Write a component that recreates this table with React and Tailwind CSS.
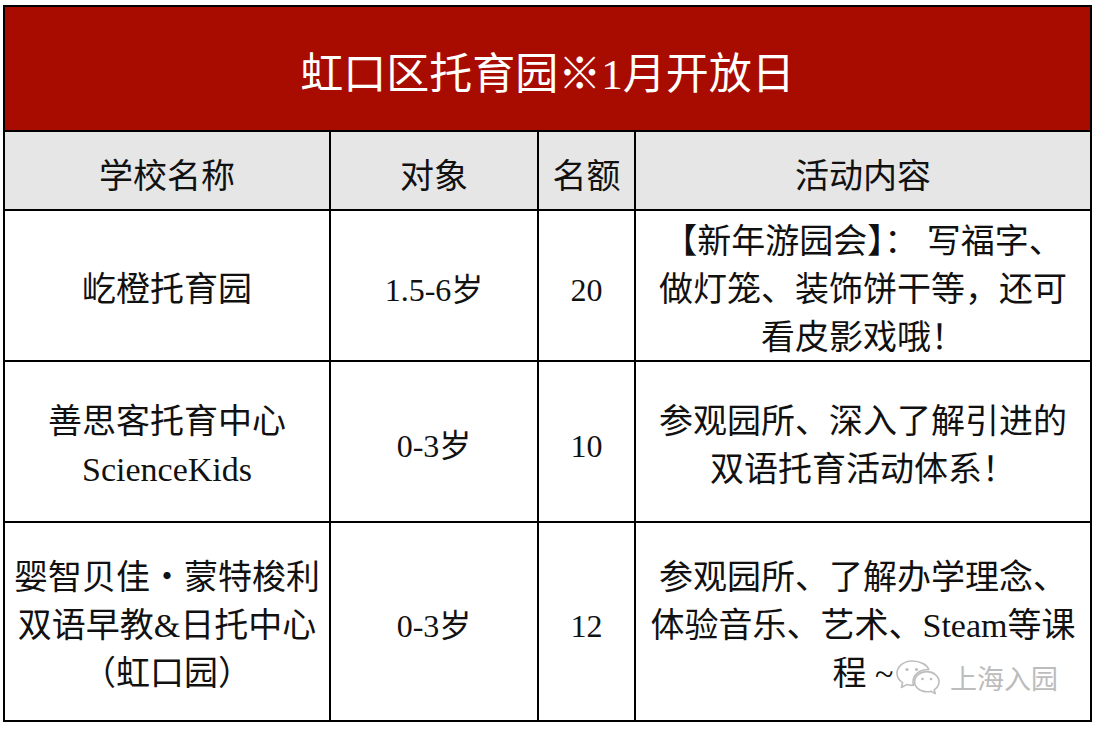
import React from 'react'

const font = { fontFamily: '"Liberation Serif", "Noto Sans CJK SC", serif' }

const rows = [
    {
        name: ['屹橙托育园'],
        age: '1.5-6岁',
        count: '20',
        content: ['【新年游园会】： 写福字、', '做灯笼、装饰饼干等，还可', '看皮影戏哦！'],
        h: 'h-[149px]',
    },
    {
        name: ['善思客托育中心', 'ScienceKids'],
        age: '0-3岁',
        count: '10',
        content: ['参观园所、深入了解引进的', '双语托育活动体系！'],
        h: 'h-[159px]',
    },
    {
        name: ['婴智贝佳・蒙特梭利', '双语早教&日托中心', '（虹口园）'],
        age: '0-3岁',
        count: '12',
        content: ['参观园所、了解办学理念、', '体验音乐、艺术、Steam等课', '程 ~'],
        h: 'h-[197px]',
    },
]

const WeChatMark = () => (
    <div className="absolute right-[32px] bottom-[24px] flex items-center gap-[8px]">
        <svg width="48" height="38" viewBox="0 0 48 38" fill="none">
            <path d="M18 3C9.5 3 3 8.6 3 15.3c0 3.9 2.2 7.2 5.6 9.4L7.4 29.5l5.3-2.9c1.7.5 3.5.8 5.3.8.6 0 1.1 0 1.6-.1-.4-1.1-.6-2.3-.6-3.5 0-6.9 6.6-12.3 14.7-12.3h1.1C33.2 7 26.3 3 18 3z" fill="white" stroke="#bdbdbd" strokeWidth="1.6" strokeLinejoin="round" />
            <path d="M45 23.7c0-5.6-5.5-10.1-12.2-10.1S20.6 18.1 20.6 23.7s5.5 10.1 12.2 10.1c1.4 0 2.8-.2 4.1-.6l4.4 2.4-1.1-3.9c2.9-1.9 4.8-4.8 4.8-8z" fill="white" stroke="#bdbdbd" strokeWidth="1.6" strokeLinejoin="round" />
            <circle cx="13" cy="11.5" r="1.6" fill="#bdbdbd" />
            <circle cx="22.5" cy="11.5" r="1.6" fill="#bdbdbd" />
            <circle cx="28.5" cy="21" r="1.3" fill="#bdbdbd" />
            <circle cx="37" cy="21" r="1.3" fill="#bdbdbd" />
        </svg>
        <span className="text-[27px] leading-none text-[#bcbcbc]" style={{ fontFamily: '"Noto Sans CJK SC", sans-serif', textShadow: '0 0 2px #fff' }}>上海入园</span>
    </div>
)

const App = () => {
    return (
        <div className="w-[1096px] h-[729px] bg-white pt-[5px] pl-[3px]" style={font}>
            <div className="grid grid-cols-[324px_206px_95px_454px] gap-[2px] p-[2px] bg-black w-[1089px] text-[#111] text-[34px]">

                <div className="col-span-4 h-[123px] pt-[14px] bg-[#a80c00] flex items-center justify-center text-white text-[43px]">
                    虹口区托育园※1月开放日
                </div>

                <div className="h-[77px] pt-[12px] bg-[#e6e6e6] flex items-center justify-center">学校名称</div>
                <div className="h-[77px] pt-[12px] bg-[#e6e6e6] flex items-center justify-center">对象</div>
                <div className="h-[77px] pt-[12px] bg-[#e6e6e6] flex items-center justify-center">名额</div>
                <div className="h-[77px] pt-[12px] bg-[#e6e6e6] flex items-center justify-center">活动内容</div>

                {rows.map((r, i) => (
                    <React.Fragment key={i}>
                        <div className={`${r.h} pt-[8px] bg-white flex flex-col items-center justify-center leading-[48px] text-center`}>
                            {r.name.map((l, j) => (
                                <div key={j}>{l}</div>
                            ))}
                        </div>
                        <div className={`${r.h} pt-[8px] bg-white flex items-center justify-center text-[32px]`}>{r.age}</div>
                        <div className={`${r.h} pt-[8px] bg-white flex items-center justify-center text-[32px]`}>{r.count}</div>
                        <div className={`${r.h} pt-[8px] bg-white relative flex flex-col items-center justify-center leading-[48px] text-center`}>
                            {r.content.map((l, j) => (
                                <div key={j} className="whitespace-nowrap">{l}</div>
                            ))}
                            {i === 2 && <WeChatMark />}
                        </div>
                    </React.Fragment>
                ))}
            </div>
        </div>
    )
}

export default App
